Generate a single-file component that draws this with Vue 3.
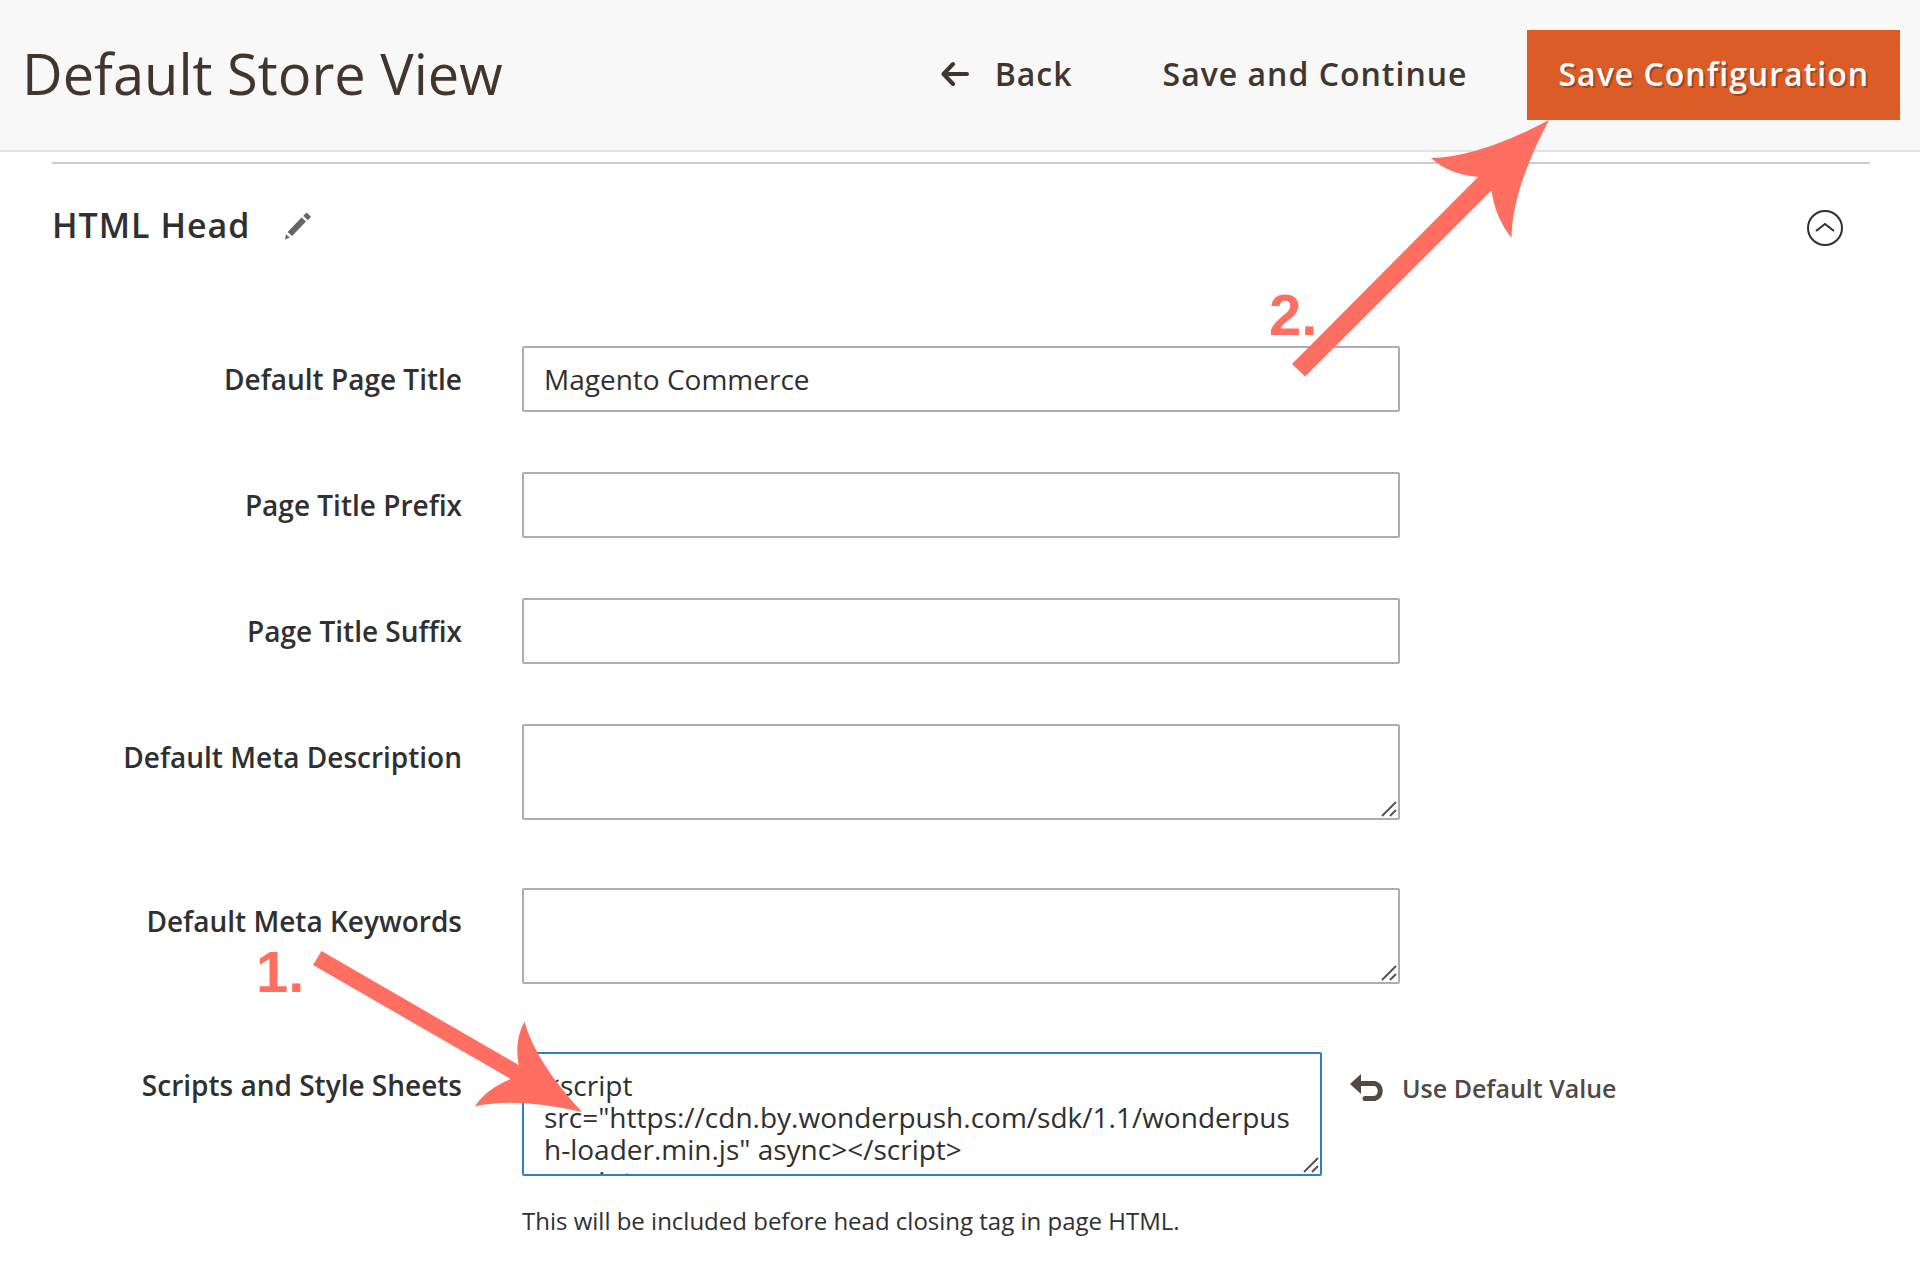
<script setup>
import { reactive } from 'vue'

const fields = reactive([
  { id: 'default_title', label: 'Default Page Title', type: 'text', value: 'Magento Commerce' },
  { id: 'title_prefix', label: 'Page Title Prefix', type: 'text', value: '' },
  { id: 'title_suffix', label: 'Page Title Suffix', type: 'text', value: '' },
  { id: 'default_description', label: 'Default Meta Description', type: 'area', value: '' },
  { id: 'default_keywords', label: 'Default Meta Keywords', type: 'area', value: '' },
])

const includes = reactive({
  value:
    '<' + 'script src="https://cdn.by.wonderpush.com/sdk/1.1/wonderpush-loader.min.js" async><\/script>\n<' +
    'script>',
})
</script>

<template>
  <div class="page">
    <header class="page-header">
      <h1 class="page-title">Default Store View</h1>
      <div class="page-actions">
        <button type="button" class="action">
          <svg class="icon-back" width="28" height="26" viewBox="0 0 28 26" aria-hidden="true">
            <path d="M12 3 2.500 13 12 23M3 13h23" />
          </svg>
          Back
        </button>
        <button type="button" class="action">Save and Continue</button>
        <div class="primary-wrap">
          <button type="button" class="action primary">Save Configuration</button>
          <svg class="callout callout-save" width="300" height="280" viewBox="0 0 300 280">
            <path
              d="M31 254 217 67Q187 64 170 48Q218 47 288 10Q251 80 250.500 128Q234 107 230.500 80.500L44 266.500Z"
            />
            <text x="8" y="225">2.</text>
          </svg>
        </div>
      </div>
    </header>

    <main class="content">
      <section class="section">
        <div class="section-head">
          <h2 class="section-title">HTML Head</h2>
          <svg class="icon-pencil" width="28" height="28" viewBox="0 0 28 28" aria-hidden="true">
            <path d="M1 27.500 2 22.200 5.800 25.500ZM3.600 20 17.500 5.500 22 9.600 8.200 24ZM19.300 3.700 22.600.5 27 4.800 23.800 8.200Z" />
          </svg>
          <button type="button" class="collapse" aria-label="Collapse HTML Head">
            <svg width="38" height="38" viewBox="0 0 38 38" aria-hidden="true">
              <circle cx="19" cy="19" r="17" />
              <path d="M10 22 19 15 28 22" />
            </svg>
          </button>
        </div>

        <form class="form" @submit.prevent>
          <div v-for="f in fields" :key="f.id" class="row" :class="f.type">
            <label class="label" :for="f.id">{{ f.label }}</label>
            <input v-if="f.type === 'text'" :id="f.id" v-model="f.value" type="text" class="control" />
            <div v-else class="area-wrap">
              <textarea :id="f.id" v-model="f.value" class="control"></textarea>
              <svg class="grip" width="16" height="16" viewBox="0 0 16 16" aria-hidden="true">
                <path d="M1 15 15 1M9 15l6-6" />
              </svg>
            </div>
          </div>

          <div class="row scripts">
            <label class="label" for="head_includes">Scripts and Style Sheets</label>
            <div>
              <div class="area-wrap">
                <textarea
                  id="head_includes"
                  v-model="includes.value"
                  class="control active"
                  spellcheck="false"
                  aria-describedby="head_note"
                ></textarea>
                <svg class="grip" width="16" height="16" viewBox="0 0 16 16" aria-hidden="true">
                  <path d="M1 15 15 1M9 15l6-6" />
                </svg>
                <svg class="callout callout-script" width="340" height="180" viewBox="0 0 340 180">
                  <path
                    d="M71.500 11 268.700 125Q264 100 274.500 81.500Q285.500 122 332 172Q265 157 225 166.500Q235 150 260.700 139L63 25Z"
                  />
                  <text x="6" y="52">1.</text>
                </svg>
              </div>
              <p id="head_note" class="note">This will be included before head closing tag in page HTML.</p>
            </div>
            <button type="button" class="use-default">
              <svg width="36" height="28" viewBox="0 0 36 28" aria-hidden="true">
                <path class="head" d="M0 10 11 0v20Z" />
                <path class="tail" d="M10 9.500H25a8 8 0 0 1 0 15H15" />
              </svg>
              Use Default Value
            </button>
          </div>
        </form>
      </section>
    </main>
  </div>
</template>

<style>
body {
  margin: 0;
  background: #fff;
}
</style>

<style scoped>
.page {
  overflow-x: hidden;
  font-family: 'Open Sans', 'Noto Sans', sans-serif;
  font-size: 28px;
  color: #303030;
}

button {
  border: 0;
  background: none;
  padding: 0;
  font: inherit;
  color: inherit;
  cursor: pointer;
}

.page-header {
  display: flex;
  align-items: center;
  justify-content: space-between;
  padding: 30px 20px 30px 22px;
  background: #f8f8f8;
  border-bottom: 2px solid #e3e3e3;
  color: #41362f;
}

.page-title {
  margin: 0;
  padding-bottom: 4px;
  font-size: 56px;
  font-weight: 400;
  line-height: 84px;
}

.page-actions {
  display: flex;
  align-items: center;
}

.action {
  display: flex;
  align-items: center;
  box-sizing: border-box;
  height: 90px;
  padding: 0 31px 4px;
  font-size: 32px;
  font-weight: 600;
  letter-spacing: 1px;
  white-space: nowrap;
}

.action + .action {
  margin-left: 28px;
  padding-right: 60px;
}

.icon-back {
  margin: 2px 26px 0 0;
  fill: none;
  stroke: #41362f;
  stroke-width: 4;
  stroke-linecap: round;
  stroke-linejoin: round;
}

.primary-wrap {
  position: relative;
}

.action.primary {
  background: #dc5c28;
  color: #fff;
  text-shadow: 2px 2px 0 rgba(0, 0, 0, 0.25);
}

.callout {
  position: absolute;
  z-index: 2;
  overflow: visible;
  pointer-events: none;
  fill: #ff6f61;
  font-family: 'Liberation Sans', Arial, sans-serif;
  font-size: 58px;
  font-weight: 700;
}

.callout-save {
  top: 80px;
  left: -266px;
}

.callout-script {
  top: -112px;
  left: -272px;
}

.content {
  padding: 10px 50px 24px 52px;
}

.section {
  border-top: 2px solid #ccc;
}

.section-head {
  display: flex;
  align-items: center;
  padding: 38px 26px 0 0;
}

.section-title {
  margin: 0;
  padding-bottom: 2px;
  font-size: 34px;
  font-weight: 600;
  line-height: 46px;
  letter-spacing: 1px;
}

.icon-pencil {
  margin-left: 34px;
  fill: #666;
}

.collapse {
  display: flex;
  margin-left: auto;
  padding-top: 4px;
}

.collapse svg {
  fill: none;
  stroke: #303030;
  stroke-width: 2;
}

.form {
  padding-top: 96px;
}

.row {
  display: grid;
  grid-template-columns: 470fr 878fr 470fr;
  align-items: start;
  margin-bottom: 60px;
}

.row.area {
  margin-bottom: 68px;
}

.row.scripts {
  grid-template-columns: 470fr 800fr 548fr;
  margin-bottom: 0;
}

.label {
  padding: 13px 60px 0 0;
  font-weight: 600;
  line-height: 40px;
  text-align: right;
}

.control {
  display: block;
  box-sizing: border-box;
  width: 100%;
  height: 66px;
  margin: 0;
  padding: 0 20px;
  border: 2px solid #adadad;
  border-radius: 2px;
  background: #fff;
  font: inherit;
  color: inherit;
  outline: 0;
}

textarea.control {
  height: 96px;
  padding: 15px 20px;
  line-height: 32px;
  resize: none;
  overflow: hidden;
}

textarea.active {
  height: 124px;
  border-color: #2f7dd1;
}

.area-wrap {
  position: relative;
}

.grip {
  position: absolute;
  right: 3px;
  bottom: 3px;
  fill: none;
  stroke: #555;
  stroke-width: 2;
  pointer-events: none;
}

.note {
  margin: 27px 0 0;
  font-size: 24px;
  line-height: 36px;
}

.use-default {
  display: flex;
  align-items: center;
  gap: 16px;
  margin: 16px 0 0 28px;
  font-size: 25px;
  font-weight: 600;
  line-height: 40px;
  color: #514943;
  white-space: nowrap;
}

.use-default .head {
  fill: #514943;
}

.use-default .tail {
  fill: none;
  stroke: #514943;
  stroke-width: 5;
  stroke-linecap: round;
}
</style>
